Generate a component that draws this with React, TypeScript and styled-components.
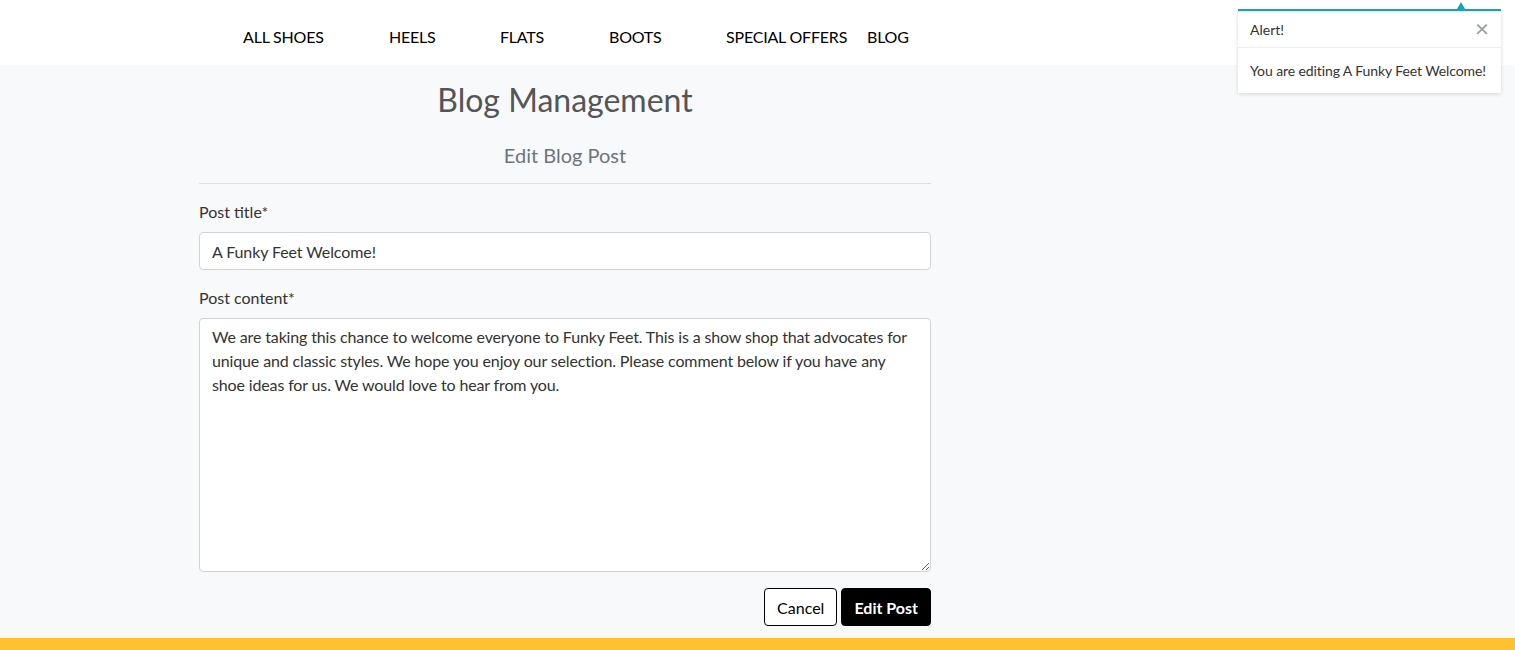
import React from "react";
import styled, { createGlobalStyle } from "styled-components";

const Global = createGlobalStyle`
  * { box-sizing: border-box; }
  html, body { margin: 0; padding: 0; }
  body {
    font-family: Lato, "Open Sans", sans-serif;
    background: #f8f9fa;
    color: #333;
    height: 650px;
    overflow: hidden;
  }
`;

const Page = styled.div`
  position: relative;
  display: flex;
  flex-direction: column;
  height: 650px;
`;

const NavBar = styled.nav`
  height: 65px;
  background: #fff;
  display: flex;
  align-items: center;
  padding-left: 243px;
  padding-top: 8px;
`;

const NavItem = styled.a<{ $w: number }>`
  width: ${(p) => p.$w}px;
  font-size: 16px;
  color: #000;
  text-decoration: none;
  letter-spacing: -0.2px;
  text-transform: uppercase;
  white-space: nowrap;
`;

const Main = styled.main`
  flex: 1;
  display: flex;
  padding-left: 199px;
`;

const Column = styled.section`
  width: 732px;
  display: flex;
  flex-direction: column;
`;

const Title = styled.h1`
  margin: 16px 0 0;
  text-align: center;
  font-size: 32px;
  font-weight: 400;
  line-height: 38px;
  color: #555;
`;

const Subtitle = styled.h2`
  margin: 24px 0 0;
  text-align: center;
  font-size: 20px;
  font-weight: 400;
  line-height: 24px;
  color: #6c757d;
`;

const Rule = styled.hr`
  margin: 16px 0 0;
  border: 0;
  border-top: 1px solid #dee2e6;
`;

const Label = styled.label<{ $top: number }>`
  display: block;
  margin-top: ${(p) => p.$top}px;
  font-size: 16px;
  line-height: 24px;
  color: #333;
`;

const TextInput = styled.input`
  display: block;
  margin-top: 8px;
  width: 100%;
  height: 38px;
  padding: 6px 12px;
  border: 1px solid #ced4da;
  border-radius: 4px;
  background: #fff;
  font-family: Lato, sans-serif;
  font-size: 16px;
  letter-spacing: -0.1px;
  color: #333;
  outline: none;
`;

const TextArea = styled.textarea`
  display: block;
  margin-top: 8px;
  width: 100%;
  height: 254px;
  padding: 6px 12px;
  border: 1px solid #ced4da;
  border-radius: 4px;
  background: #fff;
  font-family: Lato, sans-serif;
  font-size: 16px;
  line-height: 24px;
  letter-spacing: -0.14px;
  color: #333;
  resize: vertical;
  outline: none;
`;

const Actions = styled.div`
  display: flex;
  justify-content: flex-end;
  gap: 4px;
  margin-top: 16px;
`;

const Button = styled.button<{ $dark?: boolean }>`
  height: 38px;
  padding: 0 12px;
  font-family: Lato, sans-serif;
  font-size: 16px;
  font-weight: ${(p) => (p.$dark ? 700 : 400)};
  border-radius: 4px;
  border: 1px solid #000;
  background: ${(p) => (p.$dark ? "#000" : "#fff")};
  color: ${(p) => (p.$dark ? "#fff" : "#000")};
  cursor: pointer;
`;

const Footer = styled.footer`
  height: 12px;
  background: #fec12f;
`;

const Toast = styled.div`
  position: absolute;
  top: 9px;
  left: 1238px;
  width: 263px;
  background: #fff;
  border-top: 2px solid #17a2b8;
  box-shadow: 0 1px 4px rgba(0, 0, 0, 0.15);
`;

const Arrow = styled.span`
  position: absolute;
  top: -9px;
  right: 36px;
  width: 0;
  height: 0;
  border-left: 4px solid transparent;
  border-right: 4px solid transparent;
  border-bottom: 7px solid #17a2b8;
`;

const ToastHeader = styled.div`
  display: flex;
  align-items: center;
  justify-content: space-between;
  height: 37px;
  padding: 1px 12px 0;
  border-bottom: 1px solid #eee;
  font-size: 14px;
  color: #333;
`;

const Close = styled.button`
  border: 0;
  background: none;
  padding: 0;
  margin-top: -3px;
  font-family: Lato, sans-serif;
  font-size: 24px;
  line-height: 1;
  color: #999;
`;

const ToastBody = styled.div`
  padding: 13px 12px 12px;
  font-size: 14px;
  line-height: 20px;
  letter-spacing: -0.1px;
  white-space: nowrap;
  color: #333;
`;

const navItems: [string, number][] = [
  ["All Shoes", 146],
  ["Heels", 111],
  ["Flats", 109],
  ["Boots", 117],
  ["Special Offers", 141],
  ["Blog", 60],
];

const content =
  "We are taking this chance to welcome everyone to Funky Feet. This is a show shop that advocates for unique and classic styles. We hope you enjoy our selection. Please comment below if you have any shoe ideas for us. We would love to hear from you.";

export default function App() {
  return (
    <>
      <Global />
      <Page>
        <NavBar>
          {navItems.map(([t, w]) => (
            <NavItem key={t} $w={w} href="#">
              {t}
            </NavItem>
          ))}
        </NavBar>
        <Main>
          <Column>
            <Title>Blog Management</Title>
            <Subtitle>Edit Blog Post</Subtitle>
            <Rule />
            <Label $top={16}>Post title*</Label>
            <TextInput defaultValue="A Funky Feet Welcome!" />
            <Label $top={16}>Post content*</Label>
            <TextArea defaultValue={content} />
            <Actions>
              <Button>Cancel</Button>
              <Button $dark>Edit Post</Button>
            </Actions>
          </Column>
        </Main>
        <Footer />
        <Toast>
          <Arrow />
          <ToastHeader>
            <span>Alert!</span>
            <Close>×</Close>
          </ToastHeader>
          <ToastBody>You are editing A Funky Feet Welcome!</ToastBody>
        </Toast>
      </Page>
    </>
  );
}
